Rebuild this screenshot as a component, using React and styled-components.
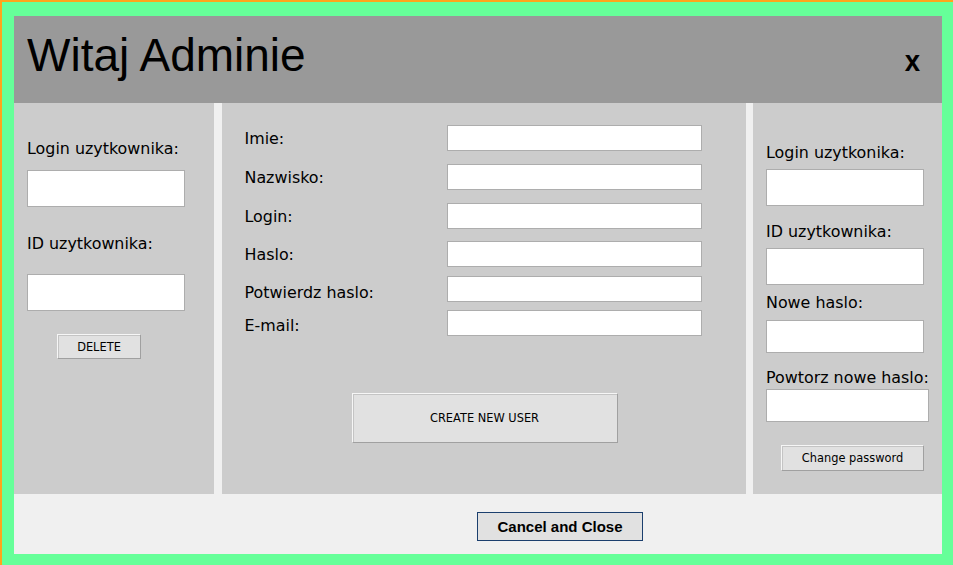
import React from "react";
import styled, { createGlobalStyle } from "styled-components";

const GlobalStyle = createGlobalStyle`
  html, body {
    margin: 0;
    padding: 0;
    background: #ffffff;
  }
  * {
    box-sizing: border-box;
  }
`;

const AdminPanel = () => {
  return (
    <Frame>
      <GlobalStyle />
      <Window>
        <Header>
          <Title>Witaj Adminie</Title>
          <CloseX>x</CloseX>
        </Header>

        <Columns>
          {/* ------------ usuwanie uzytkownika ------------ */}
          <Panel $pt={37} $pl={13}>
            <Label>Login uzytkownika:</Label>
            <TextBox $w={158} $h={37} $mt={12} />
            <Label $mt={28}>ID uzytkownika:</Label>
            <TextBox $w={158} $h={37} $mt={21} />
            <SmallButton $w={84} $h={25} $mt={23} $ml={30}>
              DELETE
            </SmallButton>
          </Panel>

          {/* ------------ nowy uzytkownik ------------ */}
          <Panel $pt={22} $pl={23}>
            <FormRow>
              <RowLabel>Imie:</RowLabel>
              <RowInput />
            </FormRow>
            <FormRow $mt={13}>
              <RowLabel>Nazwisko:</RowLabel>
              <RowInput />
            </FormRow>
            <FormRow $mt={13}>
              <RowLabel>Login:</RowLabel>
              <RowInput />
            </FormRow>
            <FormRow $mt={12}>
              <RowLabel>Haslo:</RowLabel>
              <RowInput />
            </FormRow>
            <FormRow $mt={9}>
              <RowLabel $shift={3}>Potwierdz haslo:</RowLabel>
              <RowInput />
            </FormRow>
            <FormRow $mt={8}>
              <RowLabel $shift={2}>E-mail:</RowLabel>
              <RowInput />
            </FormRow>
            <CreateButton>CREATE NEW USER</CreateButton>
          </Panel>

          {/* ------------ zmiana hasla ------------ */}
          <Panel $pt={41} $pl={13}>
            <Label>Login uzytkonika:</Label>
            <TextBox $w={158} $h={37} $mt={7} />
            <Label $mt={17}>ID uzytkownika:</Label>
            <TextBox $w={158} $h={37} $mt={7} />
            <Label $mt={9}>Nowe haslo:</Label>
            <TextBox $w={158} $h={33} $mt={8} />
            <Label $mt={16}>Powtorz nowe haslo:</Label>
            <TextBox $w={163} $h={33} $mt={2} />
            <SmallButton $w={143} $h={26} $mt={23} $ml={15}>
              Change password
            </SmallButton>
          </Panel>
        </Columns>

        <Footer>
          <CancelButton>Cancel and Close</CancelButton>
        </Footer>
      </Window>
    </Frame>
  );
};

const Frame = styled.div`
  width: 953px;
  height: 565px;
  border-top: 2px solid #ffa41c;
  border-left: 2px solid #ffa41c;
  background-color: #66ff99;
  padding: 14px 11px 11px 12px;
`;

const Window = styled.div`
  display: flex;
  flex-direction: column;
  width: 100%;
  height: 100%;
  background-color: #f0f0f0;
`;

const Header = styled.div`
  display: flex;
  justify-content: space-between;
  align-items: baseline;
  height: 87px;
  padding: 13px 21px 0 13px;
  background-color: #999999;
`;

const Title = styled.div`
  font-family: "Liberation Sans", Arial, sans-serif;
  font-size: 46px;
  line-height: 52px;
  color: #000000;
`;

const CloseX = styled.div`
  font-family: "Liberation Sans", Arial, sans-serif;
  font-size: 30px;
  font-weight: 700;
  color: #000000;
  transform: scaleX(0.92);
`;

const Columns = styled.div`
  display: grid;
  grid-template-columns: 200px 524px 189px;
  justify-content: space-between;
  height: 391px;
`;

const Panel = styled.div`
  display: flex;
  flex-direction: column;
  align-items: flex-start;
  background-color: #cccccc;
  padding-top: ${(p) => p.$pt || 0}px;
  padding-left: ${(p) => p.$pl || 0}px;
`;

const Label = styled.div`
  font-family: "DejaVu Sans", Tahoma, sans-serif;
  font-size: 15.9px;
  line-height: 18px;
  color: #000000;
  margin-top: ${(p) => p.$mt || 0}px;
  white-space: nowrap;
`;

const TextBox = styled.div`
  width: ${(p) => p.$w}px;
  height: ${(p) => p.$h}px;
  margin-top: ${(p) => p.$mt || 0}px;
  background-color: #ffffff;
  border: 1px solid #adadad;
`;

const FormRow = styled.div`
  display: flex;
  align-items: center;
  height: 26px;
  margin-top: ${(p) => p.$mt || 0}px;
`;

const RowLabel = styled.div`
  width: 202px;
  font-family: "DejaVu Sans", Tahoma, sans-serif;
  font-size: 15.9px;
  line-height: 18px;
  color: #000000;
  position: relative;
  top: ${(p) => (p.$shift || 0) + 1}px;
`;

const RowInput = styled.div`
  width: 255px;
  height: 26px;
  background-color: #ffffff;
  border: 1px solid #adadad;
`;

const ButtonBase = styled.div`
  display: flex;
  justify-content: center;
  align-items: center;
  background-color: #e1e1e1;
  border: 1px solid;
  border-color: #f6f6f6 #a0a0a0 #a0a0a0 #f6f6f6;
  box-shadow: inset 1px 1px 0 #c4c4c4;
  font-family: "DejaVu Sans", Tahoma, sans-serif;
  font-size: 11.4px;
  color: #000000;
  white-space: nowrap;
`;

const SmallButton = styled(ButtonBase)`
  width: ${(p) => p.$w}px;
  height: ${(p) => p.$h}px;
  margin-top: ${(p) => p.$mt || 0}px;
  margin-left: ${(p) => p.$ml || 0}px;
`;

const CreateButton = styled(ButtonBase)`
  align-self: center;
  width: 266px;
  height: 50px;
  margin-top: 57px;
  margin-left: -21px;
`;

const Footer = styled.div`
  display: flex;
  align-items: flex-start;
  height: 60px;
  padding: 18px 0 0 463px;
`;

const CancelButton = styled.div`
  display: flex;
  justify-content: center;
  align-items: center;
  width: 166px;
  height: 29px;
  background-color: #e1e1e1;
  border: 1px solid #1b3f6e;
  font-family: "Liberation Sans", Arial, sans-serif;
  font-size: 15px;
  font-weight: 700;
  color: #000000;
`;

export default AdminPanel;
